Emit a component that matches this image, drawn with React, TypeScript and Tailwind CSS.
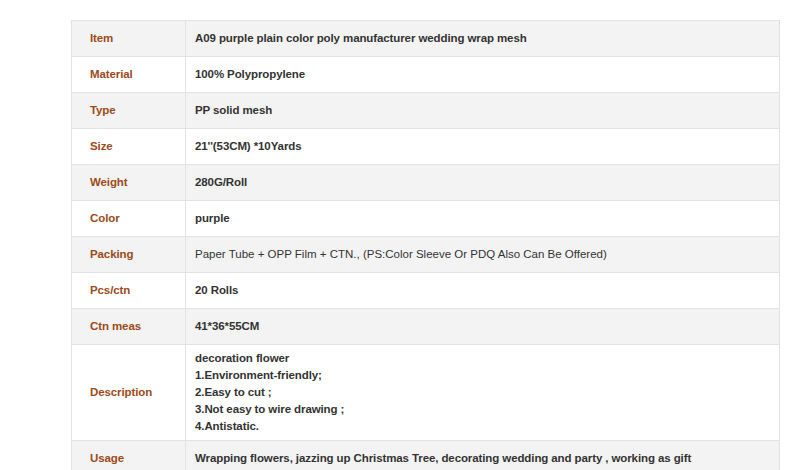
import React from "react";

type Row = { label: string; value: React.ReactNode; bold?: boolean; tall?: boolean };

const rows: Row[] = [
  { label: "Item", value: "A09 purple plain color poly manufacturer wedding wrap mesh", bold: true },
  { label: "Material", value: "100% Polypropylene", bold: true },
  { label: "Type", value: "PP solid mesh", bold: true },
  { label: "Size", value: "21''(53CM) *10Yards", bold: true },
  { label: "Weight", value: "280G/Roll", bold: true },
  { label: "Color", value: "purple", bold: true },
  { label: "Packing", value: "Paper Tube + OPP Film + CTN., (PS:Color Sleeve Or PDQ Also Can Be Offered)", bold: false },
  { label: "Pcs/ctn", value: "20 Rolls", bold: true },
  { label: "Ctn meas", value: "41*36*55CM", bold: true },
  {
    label: "Description",
    tall: true,
    bold: true,
    value: (
      <div className="leading-[17px]">
        <div>decoration flower</div>
        <div>1.Environment-friendly;</div>
        <div>2.Easy to cut ;</div>
        <div>3.Not easy to wire drawing ;</div>
        <div>4.Antistatic.</div>
      </div>
    ),
  },
  { label: "Usage", value: "Wrapping flowers, jazzing up Christmas Tree, decorating wedding and party , working as gift", bold: true },
];

export default function App() {
  return (
    <div className="w-[800px] h-[470px] overflow-hidden bg-white pt-[20px] pl-[71px]" style={{ fontFamily: '"Liberation Sans", Arial, sans-serif' }}>
      <table className="w-[709px] border-collapse text-[11.5px]">
        <tbody>
          {rows.map((r, i) => (
            <tr key={r.label} className={i % 2 === 0 ? "bg-[#f3f3f3]" : "bg-white"}>
              <td className={`w-[114px] border border-[#e2e2e2] pl-[18px] font-bold tracking-[-0.1px] text-[#9c4a1a] align-middle ${r.tall ? "h-[96px]" : "h-[36px]"}`}>
                {r.label}
              </td>
              <td className={`border border-[#e2e2e2] pl-[9px] text-[#333333] align-middle ${r.bold ? "font-bold tracking-[-0.1px]" : "font-normal"} ${r.tall ? "h-[96px]" : "h-[36px]"}`}>
                {r.value}
              </td>
            </tr>
          ))}
        </tbody>
      </table>
    </div>
  );
}
